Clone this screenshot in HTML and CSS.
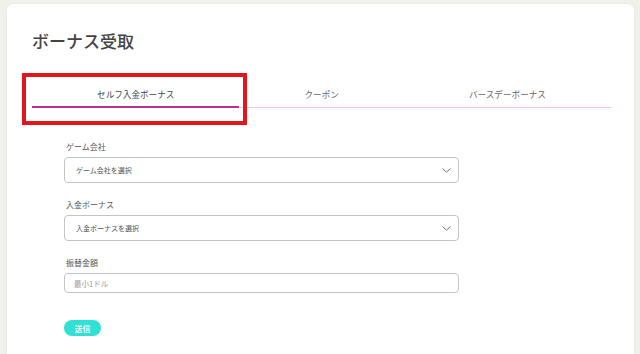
FILE: index.html
```html
<!DOCTYPE html>
<html lang="ja">
<head>
    <meta charset="UTF-8">
    <meta name="viewport" content="width=device-width, initial-scale=1.0">
    <title>ボーナス受取</title>
    <link rel="stylesheet" href="styles.css">
</head>
<body>
    <div class="card">
        <h1 class="title">ボーナス受取</h1>

        <!-- Tabs -->
        <div class="tabs">
            <div class="tab active">セルフ入金ボーナス</div>
            <div class="tab">クーポン</div>
            <div class="tab">バースデーボーナス</div>
        </div>

        <!-- Bonus form -->
        <form class="bonus-form">
            <div class="field">
                <label class="field-label">ゲーム会社</label>
                <div class="select-wrap">
                    <select class="select">
                        <option>ゲーム会社を選択</option>
                    </select>
                    <svg class="chevron" width="9" height="5" viewBox="0 0 9 5"><path d="M0.5 0.5 L4.5 4.2 L8.5 0.5" fill="none" stroke="#777" stroke-width="1"/></svg>
                </div>
            </div>
            <div class="field">
                <label class="field-label">入金ボーナス</label>
                <div class="select-wrap">
                    <select class="select">
                        <option>入金ボーナスを選択</option>
                    </select>
                    <svg class="chevron" width="9" height="5" viewBox="0 0 9 5"><path d="M0.5 0.5 L4.5 4.2 L8.5 0.5" fill="none" stroke="#777" stroke-width="1"/></svg>
                </div>
            </div>
            <div class="field">
                <label class="field-label">振替金額</label>
                <input class="input" type="text" placeholder="最小1ドル">
            </div>
            <button type="button" class="submit">送信</button>
        </form>
    </div>

    <!-- Highlight around the active tab -->
    <div class="highlight"></div>
</body>
</html>
```

FILE: styles.css
```css
html, body {
    height: 100%;
}
body {
    margin: 0;
    background-color: #f2f0eb;
    font-family: "Noto Sans CJK JP", "Noto Sans", sans-serif;
    color: #444;
    overflow: hidden;
    position: relative;
}
.card {
    margin: 4px 6px 0 7px;
    background-color: #fff;
    border-radius: 6px;
    box-shadow: 0 0 2px rgba(0, 0, 0, 0.08);
    padding: 25px 23px 30px 25px;
}
.title {
    margin: 0;
    font-size: 17px;
    line-height: 24px;
    font-weight: 500;
    color: #444;
}
.tabs {
    display: flex;
    margin-top: 34px;
    border-bottom: 1px solid #f0c8e2;
}
.tab {
    flex: 1 1 auto;
    text-align: center;
    font-size: 8.6px;
    line-height: 14px;
    padding-bottom: 6px;
    color: #666;
    position: relative;
}
.tab.active {
    color: #444;
}
.tab.active::after {
    content: "";
    position: absolute;
    left: 0;
    right: 0;
    bottom: -1px;
    height: 2px;
    background-color: #b8338c;
}
.bonus-form {
    margin: 33px 0 0 32px;
    width: 395px;
}
.field {
    margin-bottom: 16px;
}
.field-label {
    display: block;
    font-size: 8px;
    line-height: 12px;
    margin-bottom: 4px;
    margin-left: 2px;
    color: #555;
}
.select-wrap {
    position: relative;
}
.select {
    appearance: none;
    -webkit-appearance: none;
    display: block;
    width: 100%;
    height: 26px;
    box-sizing: border-box;
    border: 1px solid #c4c4c4;
    border-radius: 4px;
    background-color: #fff;
    padding: 0 0 0 11px;
    font-family: inherit;
    font-size: 7px;
    color: #555;
    outline: none;
}
.chevron {
    position: absolute;
    right: 8px;
    top: 11px;
}
.input {
    display: block;
    width: 100%;
    height: 20px;
    box-sizing: border-box;
    border: 1px solid #c4c4c4;
    border-radius: 4px;
    padding: 0 0 0 9px;
    font-family: inherit;
    font-size: 7.5px;
    outline: none;
}
.input::placeholder {
    color: #999;
}
.submit {
    display: block;
    margin-top: 27px;
    width: 37px;
    height: 16px;
    padding: 0;
    border: none;
    border-radius: 8px;
    background-color: #30e0d4;
    color: #fff;
    font-family: inherit;
    font-size: 8px;
    font-weight: 500;
    cursor: pointer;
}
.highlight {
    position: absolute;
    left: 22px;
    top: 73px;
    width: 225px;
    height: 52px;
    box-sizing: border-box;
    border: 4px solid #e2161f;
}
```
